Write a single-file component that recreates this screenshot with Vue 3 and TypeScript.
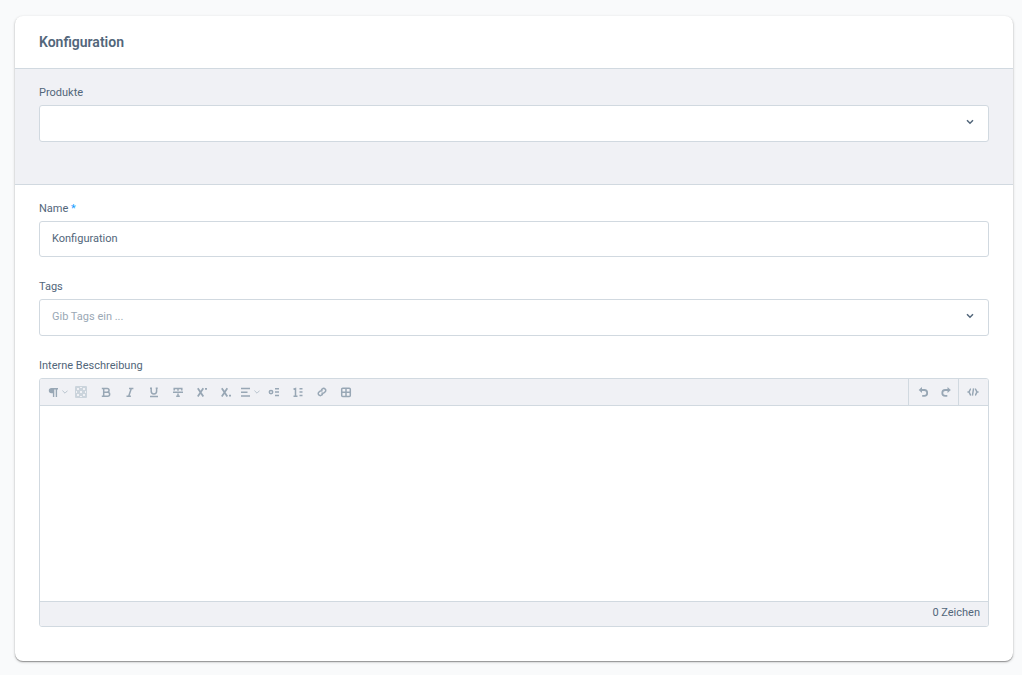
<script setup lang="ts">
import { ref } from 'vue'

interface Tool {
  id: string
  label: string
  menu?: boolean
}

const product = ref('')
const name = ref('Konfiguration')
const tags = ref('')
const description = ref('')

const tools: Tool[] = [
  { id: 'paragraph', label: 'Absatz', menu: true },
  { id: 'color', label: 'Textfarbe' },
  { id: 'bold', label: 'Fett' },
  { id: 'italic', label: 'Kursiv' },
  { id: 'underline', label: 'Unterstrichen' },
  { id: 'strike', label: 'Durchgestrichen' },
  { id: 'super', label: 'Hochgestellt' },
  { id: 'sub', label: 'Tiefgestellt' },
  { id: 'align', label: 'Ausrichtung', menu: true },
  { id: 'bullets', label: 'Liste' },
  { id: 'numbers', label: 'Nummerierte Liste' },
  { id: 'link', label: 'Link' },
  { id: 'table', label: 'Tabelle' },
]
</script>

<template>
  <main class="page">
    <section class="card">
      <header class="card-header"><h1>Konfiguration</h1></header>

      <div class="products">
        <label for="product">Produkte</label>
        <div class="control">
          <select id="product" v-model="product" class="box tall"><option value=""></option></select>
          <svg class="caret" viewBox="0 0 8 6"><path d="M1 1.3 4 4.3 7 1.3" /></svg>
        </div>
      </div>

      <div class="fields">
        <div class="field">
          <label for="name">Name <span class="required">*</span></label>
          <input id="name" v-model="name" class="box" type="text" required />
        </div>

        <div class="field">
          <label for="tags">Tags</label>
          <div class="control">
            <input id="tags" v-model="tags" class="box tall" type="text" placeholder="Gib Tags ein ..." />
            <svg class="caret" viewBox="0 0 8 6"><path d="M1 1.3 4 4.3 7 1.3" /></svg>
          </div>
        </div>

        <div class="field">
          <label for="description">Interne Beschreibung</label>
          <div class="editor">
            <div class="toolbar">
              <div class="tools">
                <button
                  v-for="tool in tools"
                  :key="tool.id"
                  type="button"
                  :class="['tool', tool.id, { menu: tool.menu }]"
                  :aria-label="tool.label"
                >
                  <svg class="icon" viewBox="0 0 12 12">
                    <path v-if="tool.id === 'paragraph'" class="solid" d="M3.4 2H10v1.4H9.1V11H7.7V3.4H6.3V11H4.9V7.2H3.4a2.6 2.6 0 0 1 0-5.2z" />
                    <template v-else-if="tool.id === 'color'">
                      <rect class="pale" x="0" y="0" width="12" height="12" rx="1" />
                      <path class="light" d="M2 2h2v2H2zM8 2h2v2H8zM5 5h2v2H5zM2 8h2v2H2zM8 8h2v2H8zM5 1h2v1H5zM5 10h2v1H5zM1 5h1v2H1zM10 5h1v2h-1z" />
                    </template>
                    <path v-else-if="tool.id === 'bold'" d="M1.8 2.5h5.4a1.8 1.8 0 0 1 0 3.7H3.6h4a2 2 0 0 1 0 4.1H1.8M3.7 2.5v7.8" />
                    <path v-else-if="tool.id === 'italic'" d="M5 2.5h4.4M2.5 10.3h4.4M7.3 2.5 4.7 10.3" />
                    <path v-else-if="tool.id === 'underline'" d="M2 2.3h2M7.7 2.3h2M3.2 2v3.2a2.7 2.7 0 0 0 5.4 0V2M2 10.5h8" />
                    <path v-else-if="tool.id === 'strike'" d="M2.2 4.4V2.5h7.6v1.9M6 2.5v2.2M1 6.3h10M6 7.6v2.9M4.2 10.3h3.6" />
                    <path v-else-if="tool.id === 'super'" class="heavy" d="M1.8 2.2 7.3 10.5M7.3 2.2 1.8 10.5M9 2.9h2" />
                    <path v-else-if="tool.id === 'sub'" class="heavy" d="M1.8 2.2 7.3 10.5M7.3 2.2 1.8 10.5M9 9.7h2" />
                    <path v-else-if="tool.id === 'align'" d="M1 2.5h9M1 6.2h6.5M1 10h9" />
                    <template v-else-if="tool.id === 'bullets'">
                      <circle cx="3" cy="6.1" r="1.7" />
                      <path d="M7 2.7h4M7 6.1h4M7 9.5h4" />
                    </template>
                    <path v-else-if="tool.id === 'numbers'" d="M1.5 3.3 3.5 2.5v7.7M1.5 10.3h4M7.5 2.7H10.5M7.5 6.1H10.5M7.5 9.5H10.5" />
                    <path v-else-if="tool.id === 'link'" d="M5.2 4 6.4 2.9a1.8 1.8 0 0 1 2.6 0l.2.2a1.8 1.8 0 0 1 0 2.6L8.1 6.8a1.8 1.8 0 0 1-2.6 0M6.8 8 5.6 9.1a1.8 1.8 0 0 1-2.6 0l-.2-.2a1.8 1.8 0 0 1 0-2.6l1.1-1.1a1.8 1.8 0 0 1 2.6 0" />
                    <path v-else d="M2.7 2.3h6.6a1 1 0 0 1 1 1v6.1a1 1 0 0 1-1 1H2.7a1 1 0 0 1-1-1V3.3a1 1 0 0 1 1-1zM6 2.3v8.1M1.7 6.3h8.6" />
                  </svg>
                  <svg v-if="tool.menu" class="mini" viewBox="0 0 6 4"><path d="M.4.6 3 3.2 5.6.6" /></svg>
                </button>
              </div>
              <div class="history">
                <button type="button" class="tool" aria-label="Rückgängig">
                  <svg class="icon" viewBox="0 0 12 12"><path class="solid" d="M5 1v6L1.7 4z" /><path class="heavy" d="M4 4h3.3a2.9 2.9 0 0 1 0 5.8H5.2" /></svg>
                </button>
                <button type="button" class="tool" aria-label="Wiederholen">
                  <svg class="icon" viewBox="0 0 12 12"><path class="solid" d="M7.5 1v6l3.3-3z" /><path class="heavy" d="M8.5 4H5.2a2.9 2.9 0 0 0 0 5.8h2.1" /></svg>
                </button>
              </div>
              <div class="source">
                <button type="button" class="tool" aria-label="Quelltext">
                  <svg class="icon" viewBox="0 0 12 12"><path d="M4 3C2.6 3 3.2 5.4 1.7 6 3.2 6.6 2.6 9 4 9M8 3c1.4 0 .8 2.4 2.3 3C8.8 6.6 9.4 9 8 9M6.6 2.4 5.4 9.6" /></svg>
                </button>
              </div>
            </div>
            <textarea id="description" v-model="description"></textarea>
            <footer class="count">{{ description.length }} Zeichen</footer>
          </div>
        </div>
      </div>
    </section>
  </main>
</template>

<style>
body {
  background: #f9fafb;
}
</style>

<style scoped>
* {
  box-sizing: border-box;
}

.page {
  padding: 16px 9px 13px 15px;
  font-family: Roboto, "Liberation Sans", sans-serif;
  font-size: 11px;
  line-height: 16px;
  color: #52667a;
}

.card {
  background: #fff;
  border-radius: 8px;
  box-shadow: 0 1px 1px rgba(0, 0, 0, 0.3), 0 1px 3px rgba(0, 0, 0, 0.22);
}

.card-header {
  padding: 16px 24px;
  border-bottom: 1px solid #d1d9e0;
}

h1 {
  margin: 0;
  font-size: 14px;
  line-height: 20px;
  font-weight: 600;
}

.products {
  padding: 16px 24px 42px;
  background: #f0f1f5;
  border-bottom: 1px solid #d1d9e0;
}

.fields {
  padding: 16px 24px 34px;
}

.field + .field {
  margin-top: 22px;
}

label {
  display: block;
  margin-bottom: 4px;
}

.required {
  color: #189eff;
}

.control {
  position: relative;
}

.box {
  display: block;
  width: 100%;
  height: 36px;
  margin: 0;
  padding: 0 12px 2px;
  border: 1px solid #d1d9e0;
  border-radius: 3px;
  background: #fff;
  font: inherit;
  color: inherit;
  appearance: none;
}

.tall {
  height: 37px;
  padding-bottom: 3px;
}

.box::placeholder {
  color: #9aa8b5;
  opacity: 1;
}

.caret {
  position: absolute;
  top: 14px;
  right: 15px;
  width: 8px;
  height: 6px;
  pointer-events: none;
}

svg {
  display: block;
  flex: none;
  fill: none;
  stroke: currentColor;
  stroke-width: 1.5;
}

.editor {
  border: 1px solid #d1d9e0;
  border-radius: 3px;
  overflow: hidden;
}

.toolbar {
  display: flex;
  height: 27px;
  background: #f0f1f5;
  border-bottom: 1px solid #d1d9e0;
  color: #98a7b5;
}

.tools {
  display: flex;
  flex: 1;
}

.tool {
  display: flex;
  align-items: center;
  justify-content: center;
  width: 24px;
  padding: 0;
  border: 0;
  background: none;
  color: inherit;
}

.menu {
  justify-content: flex-start;
  gap: 2px;
  padding-left: 2px;
}

.paragraph {
  width: 29px;
  padding-left: 8px;
}

.color {
  width: 25px;
  padding-right: 1px;
}

.icon {
  width: 12px;
  height: 12px;
}

.mini {
  width: 6px;
  height: 4px;
}

.mini path {
  stroke: #b9c4ce;
  stroke-width: 1;
}

.heavy {
  stroke-width: 1.8;
}

.solid {
  fill: currentColor;
  stroke: none;
}

.pale {
  fill: #cbd4dc;
  stroke: none;
}

.light {
  fill: #f0f1f5;
  stroke: none;
}

.history,
.source {
  display: flex;
  border-left: 1px solid #d1d9e0;
}

.history {
  width: 50px;
  padding-left: 2px;
}

.source {
  width: 30px;
  padding-left: 2px;
}

textarea {
  display: block;
  width: 100%;
  height: 195px;
  padding: 12px;
  border: 0;
  resize: none;
  outline: 0;
  font: inherit;
  color: inherit;
}

.count {
  padding: 3px 8px 5px;
  border-top: 1px solid #d1d9e0;
  background: #f0f1f5;
  text-align: right;
}
</style>
